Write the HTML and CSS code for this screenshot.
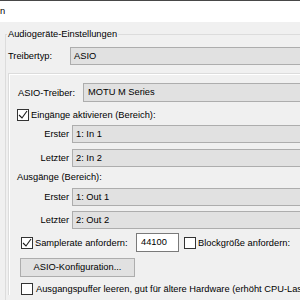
FILE: index.html
```html
<!DOCTYPE html>
<html>
<head lang="de">
    <meta charset="UTF-8">
    <title>Audiogeräte-Einstellungen</title>
    <link rel="stylesheet" href="styles.css">
</head>
<body>
<div class="topbar"><span>n</span></div>

<fieldset class="group">
    <legend>Audiogeräte-Einstellungen</legend>

    <div class="row row-type">
        <label class="lbl-type">Treibertyp:</label>
        <div class="combo">ASIO</div>
    </div>

    <div class="panel">
        <div class="row row-driver">
            <label class="lbl-driver">ASIO-Treiber:</label>
            <div class="combo">MOTU M Series</div>
        </div>

        <div class="row row-inputs">
            <span class="box"><svg width="10" height="10" viewBox="0 0 10 10"><polyline points="1,5 4,8 9,1" fill="none" stroke="#1a1a1a" stroke-width="1.1"/></svg></span>
            <span class="txt">Eingänge aktivieren (Bereich):</span>
        </div>

        <div class="row range range-a">
            <label class="lbl-range">Erster</label>
            <div class="combo">1: In 1</div>
        </div>
        <div class="row range range-b">
            <label class="lbl-range">Letzter</label>
            <div class="combo">2: In 2</div>
        </div>

        <div class="row heading">Ausgänge (Bereich):</div>

        <div class="row range range-c">
            <label class="lbl-range">Erster</label>
            <div class="combo">1: Out 1</div>
        </div>
        <div class="row range range-d">
            <label class="lbl-range">Letzter</label>
            <div class="combo">2: Out 2</div>
        </div>

        <div class="row row-rate">
            <span class="box"><svg width="10" height="10" viewBox="0 0 10 10"><polyline points="1,5 4,8 9,1" fill="none" stroke="#1a1a1a" stroke-width="1.1"/></svg></span>
            <span class="txt lbl-rate">Samplerate anfordern:</span>
            <div class="edit">44100</div>
            <span class="box box-block"></span>
            <span class="txt">Blockgröße anfordern:</span>
        </div>

        <div class="row row-btn">
            <div class="button">ASIO-Konfiguration...</div>
        </div>

        <div class="row row-flush">
            <span class="box"></span>
            <span class="txt">Ausgangspuffer leeren, gut für ältere Hardware (erhöht CPU-Last)</span>
        </div>
    </div>
</fieldset>
</body>
</html>
```

FILE: styles.css
```css
* {
    padding: 0;
    margin: 0;
    box-sizing: border-box;
}

body {
    width: 300px;
    height: 300px;
    overflow: hidden;
    background-color: #f0f0f0;
    font-family: "Liberation Sans", Arial, sans-serif;
    font-size: 9.3px;
    line-height: 12px;
    color: #000;
}

.topbar {
    height: 22px;
    padding-top: 4px;
    background-color: #fff;
    border-top: 1px solid #474747;
    white-space: nowrap;
}

/* group box */
.group {
    width: 420px;
    margin: 6px 0 0 5px;
    padding: 0 0 40px 1px;
    border: 1px solid #dcdcdc;
    border-right: none;
}

.group legend {
    padding: 0 1px;
    line-height: 12px;
}

.row {
    display: flex;
    align-items: center;
    white-space: nowrap;
}

.combo {
    flex: 1;
    height: 18px;
    padding-left: 3px;
    line-height: 16px;
    background-color: #e1e1e1;
    border: 1px solid #adadad;
}

.row-type {
    margin: 7px 0 0 1px;
}

.lbl-type {
    width: 62px;
}

/* inner frame */
.panel {
    margin: 8px 0 0 1px;
    padding-top: 9px;
    border-top: 1px solid #dcdcdc;
    border-left: 1px solid #dcdcdc;
    box-shadow: inset 1px 1px 0 #fff;
}

.row-driver {
    margin-left: 9px;
}

.row-driver .combo {
    height: 19px;
    line-height: 17px;
    padding-left: 4px;
}

.lbl-driver {
    width: 65px;
}

.box {
    width: 12px;
    height: 12px;
    flex: none;
    display: flex;
    align-items: center;
    justify-content: center;
    background-color: #fff;
    border: 1px solid #333;
}

.row-inputs {
    margin: 6px 0 0 8px;
    height: 13px;
}

.row-inputs .txt {
    margin-left: 2px;
}

.lbl-range {
    width: 60px;
    margin-right: 3px;
    text-align: right;
}

.range-a {
    margin-top: 4px;
}

.range-b {
    margin-top: 6px;
}

.range-c {
    margin-top: 5px;
}

.range-d {
    margin-top: 5px;
}

.heading {
    margin: 4px 0 0 8px;
}

.row-rate {
    margin: 4px 0 0 12px;
}

.row-rate .txt {
    margin-left: 2px;
}

.lbl-rate {
    width: 101px;
    margin-left: 3px;
}

.edit {
    width: 43px;
    height: 19px;
    padding-left: 4px;
    line-height: 17px;
    background-color: #fff;
    border: 1px solid #7a7a7a;
}

.box-block {
    margin-left: 5px;
}

.row-btn {
    margin: 6px 0 0 11px;
}

.button {
    width: 115px;
    height: 19px;
    line-height: 17px;
    text-align: center;
    background-color: #e1e1e1;
    border: 1px solid #adadad;
}

.row-flush {
    margin: 6px 0 0 12px;
}

.row-flush .txt {
    margin-left: 3px;
}
```
